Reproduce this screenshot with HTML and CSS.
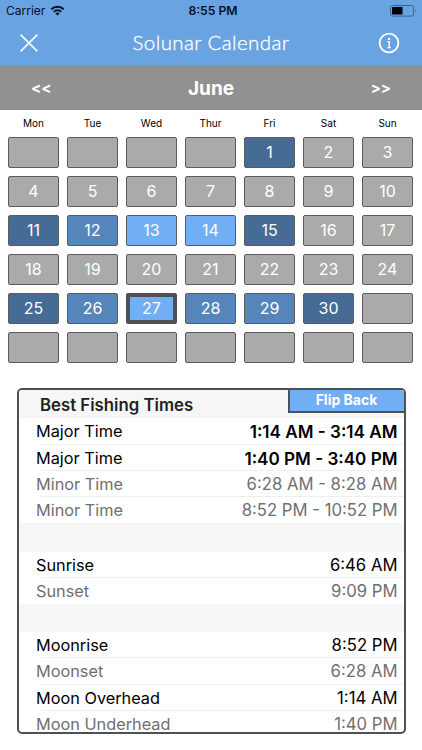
FILE: index.html
```html
<!DOCTYPE html>
<html lang="en">
<head>
  <meta charset="UTF-8">
  <meta name="viewport" content="width=device-width, initial-scale=1.0">
  <title>Solunar Calendar</title>
  <link rel="stylesheet" href="styles.css">
</head>
<body>
  <div class="header">
    <div class="status-bar">
      <div class="carrier">
        <span>Carrier</span>
        <svg class="wifi" width="15" height="11" viewBox="0 0 14 11">
          <path d="M0.8 4.2 A8.8 8.8 0 0 1 13.2 4.2" fill="none" stroke="#06111f" stroke-width="2"/>
          <path d="M3.2 6.8 A5.4 5.4 0 0 1 10.8 6.8" fill="none" stroke="#06111f" stroke-width="1.8"/>
          <path d="M7 10.6 L4.9 8.5 A3 3 0 0 1 9.1 8.5 Z" fill="#06111f"/>
        </svg>
      </div>
      <span class="clock">8:55 PM</span>
      <svg class="battery" width="27" height="12" viewBox="0 0 27 12">
        <rect x="0.5" y="0.5" width="23" height="10.6" rx="2" fill="none" stroke="#3e608a"/>
        <rect x="2" y="2" width="10.5" height="7.6" rx="0.6" fill="#000"/>
        <path d="M25 4 Q26.6 5.8 25 7.8 Z" fill="#3e608a"/>
      </svg>
    </div>
    <div class="title-bar">
      <svg class="close" width="18" height="18" viewBox="0 0 18 18">
        <path d="M0.6 0.6 L17.4 17.4 M17.4 0.6 L0.6 17.4" stroke="#fff" stroke-width="1.5"/>
      </svg>
      <h1 class="title">Solunar Calendar</h1>
      <svg class="info" width="22" height="22" viewBox="0 0 22 22">
        <circle cx="11" cy="11" r="9.4" fill="none" stroke="#fff" stroke-width="1.9"/>
        <circle cx="11" cy="6.9" r="1.2" fill="#fff"/>
        <path d="M9.6 9.8 H11.2 V15.5 M9.4 15.6 H12.8" fill="none" stroke="#fff" stroke-width="1.4"/>
      </svg>
    </div>
  </div>

  <div class="month-bar">
    <span class="prev">&lt;&lt;</span>
    <span class="month">June</span>
    <span class="next">&gt;&gt;</span>
  </div>

  <div class="weekdays">
    <span>Mon</span><span>Tue</span><span>Wed</span><span>Thur</span><span>Fri</span><span>Sat</span><span>Sun</span>
  </div>

  <div class="calendar">
    <div class="day"></div>
    <div class="day"></div>
    <div class="day"></div>
    <div class="day"></div>
    <div class="day good">1</div>
    <div class="day">2</div>
    <div class="day">3</div>

    <div class="day">4</div>
    <div class="day">5</div>
    <div class="day">6</div>
    <div class="day">7</div>
    <div class="day">8</div>
    <div class="day">9</div>
    <div class="day">10</div>

    <div class="day good">11</div>
    <div class="day better">12</div>
    <div class="day best">13</div>
    <div class="day best">14</div>
    <div class="day good">15</div>
    <div class="day">16</div>
    <div class="day">17</div>

    <div class="day">18</div>
    <div class="day">19</div>
    <div class="day">20</div>
    <div class="day">21</div>
    <div class="day">22</div>
    <div class="day">23</div>
    <div class="day">24</div>

    <div class="day good">25</div>
    <div class="day better">26</div>
    <div class="day best today">27</div>
    <div class="day better">28</div>
    <div class="day better">29</div>
    <div class="day good">30</div>
    <div class="day"></div>

    <div class="day"></div>
    <div class="day"></div>
    <div class="day"></div>
    <div class="day"></div>
    <div class="day"></div>
    <div class="day"></div>
    <div class="day"></div>
  </div>

  <div class="times">
    <div class="section-head">
      <h2>Best Fishing Times</h2>
      <span class="flip">Flip Back</span>
    </div>
    <div class="row major"><span>Major Time</span><span class="value">1:14 AM - 3:14 AM</span></div>
    <div class="row major"><span>Major Time</span><span class="value">1:40 PM - 3:40 PM</span></div>
    <div class="row minor"><span>Minor Time</span><span class="value">6:28 AM - 8:28 AM</span></div>
    <div class="row minor last"><span>Minor Time</span><span class="value">8:52 PM - 10:52 PM</span></div>
    <div class="section-head"></div>
    <div class="row"><span>Sunrise</span><span class="value">6:46 AM</span></div>
    <div class="row minor last"><span>Sunset</span><span class="value">9:09 PM</span></div>
    <div class="section-head"></div>
    <div class="row"><span>Moonrise</span><span class="value">8:52 PM</span></div>
    <div class="row minor"><span>Moonset</span><span class="value">6:28 AM</span></div>
    <div class="row"><span>Moon Overhead</span><span class="value">1:14 AM</span></div>
    <div class="row minor last"><span>Moon Underhead</span><span class="value">1:40 PM</span></div>
  </div>
</body>
</html>
```

FILE: styles.css
```css
* {
  box-sizing: border-box;
}
body {
  margin: 0;
  background-color: #fff;
  font-family: Inter, "Liberation Sans", sans-serif;
  height: 750px;
  overflow: hidden;
}
.header {
  height: 65px;
  background-color: #69a3e2;
}
.status-bar {
  display: grid;
  grid-template-columns: 1fr auto 1fr;
  align-items: center;
  height: 21px;
  padding: 0 5px 0 6px;
  color: #06111f;
  font-size: 12px;
}
.carrier {
  display: flex;
  align-items: center;
  gap: 5px;
}
.clock {
  padding-left: 3px;
  font-size: 12.2px;
  font-weight: 600;
}
.battery {
  justify-self: end;
}
.title-bar {
  display: grid;
  grid-template-columns: 1fr auto 1fr;
  align-items: center;
  height: 44px;
  padding: 0 22px 0 20px;
}
.info {
  justify-self: end;
}
.title {
  margin: 0;
  padding: 0 0 2px 2px;
  color: #fff;
  font-family: Lato, sans-serif;
  font-size: 20.5px;
  font-weight: 300;
  letter-spacing: 0.4px;
  -webkit-text-stroke: 0.3px #fff;
}
.month-bar {
  display: flex;
  align-items: center;
  justify-content: space-between;
  height: 45px;
  padding: 0 31px;
  background-color: #919191;
  color: #fff;
  font-size: 15px;
  font-weight: 700;
}
.month {
  padding-top: 1px;
  font-size: 19px;
}
.weekdays {
  display: grid;
  grid-template-columns: repeat(7, 51px);
  column-gap: 8px;
  height: 27px;
  padding: 0 8px;
  line-height: 26px;
  font-size: 10px;
  text-align: center;
}
.calendar {
  display: grid;
  grid-template-columns: repeat(7, 51px);
  grid-auto-rows: 31px;
  gap: 8px;
  padding: 0 8px;
}
.day {
  display: flex;
  align-items: center;
  justify-content: center;
  padding-bottom: 1px;
  border: 1px solid #5c5c5c;
  border-radius: 2px;
  background-color: #aaa;
  color: #fff;
  font-size: 16px;
  line-height: 18px;
}
.good {
  background-color: #466c96;
}
.better {
  background-color: #5685b9;
}
.best {
  background-color: #71aef3;
}
.today {
  border: 4px solid #505050;
}
.times {
  width: 389px;
  height: 346px;
  margin: 25px 0 0 16.5px;
  border: 2px solid #505050;
  border-radius: 5px;
  overflow: hidden;
}
.section-head {
  display: flex;
  justify-content: space-between;
  height: 28.4px;
  padding-left: 21.5px;
  background-color: #f6f6f6;
}
.section-head h2 {
  margin: 0;
  color: #222;
  font-size: 16.8px;
  font-weight: 600;
  line-height: 31px;
}
.flip {
  width: 116px;
  height: 23px;
  border: solid #505050;
  border-width: 0 0 2px 2px;
  background-color: #71aef3;
  color: #fff;
  font-size: 14px;
  font-weight: 700;
  line-height: 20px;
  text-align: center;
}
.row {
  display: flex;
  justify-content: space-between;
  height: 26.2px;
  padding: 0 6px 0 17.5px;
  background: linear-gradient(#eee, #eee) 22px 100% / 100% 1px no-repeat;
  color: #000;
  font-size: 16.3px;
  line-height: 27.4px;
}
.last {
  background: none;
}
.value {
  font-size: 16.7px;
}
.major .value {
  font-size: 17.1px;
  font-weight: 600;
}
.minor {
  color: #6f6f6f;
}
```
